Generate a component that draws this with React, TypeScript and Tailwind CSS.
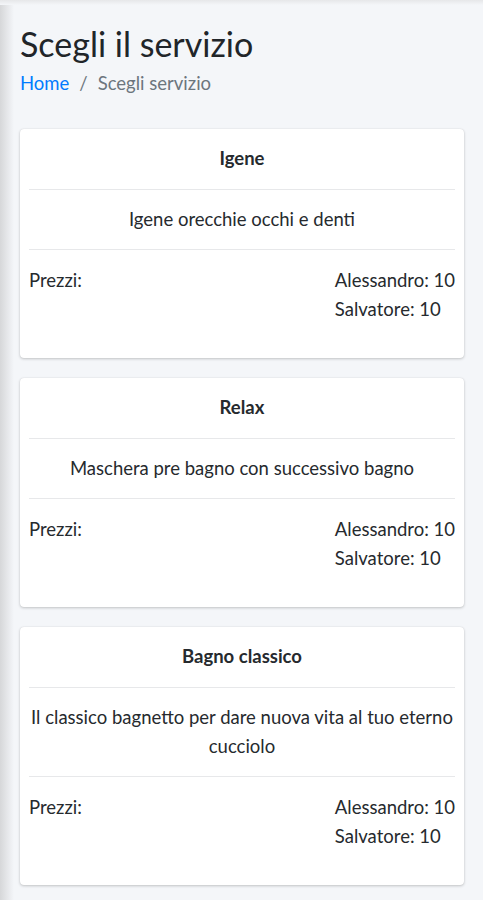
import React from "react";

type Service = { title: string; desc: string };

const services: Service[] = [
  { title: "Igene", desc: "Igene orecchie occhi e denti" },
  { title: "Relax", desc: "Maschera pre bagno con successivo bagno" },
  { title: "Bagno classico", desc: "Il classico bagnetto per dare nuova vita al tuo eterno cucciolo" },
];

function Card({ s }: { s: Service }) {
  return (
    <div className="bg-white rounded-[4px] shadow-[0_0_1px_rgba(0,0,0,0.13),0_1px_3px_rgba(0,0,0,0.2)] px-[9px]">
      <div className="pt-[15px] pb-[16px] leading-[29px] text-center font-bold border-b border-[#e7e8ea]">
        {s.title}
      </div>
      <div className="py-[15px] leading-[29px] text-center border-b border-[#e7e8ea]">{s.desc}</div>
      <div className="pt-[16px] pb-[34px] leading-[29px] flex justify-between">
        <div>Prezzi:</div>
        <div>
          <div>Alessandro: 10</div>
          <div>Salvatore: 10</div>
        </div>
      </div>
    </div>
  );
}

export default function App() {
  return (
    <div
      className="min-h-[900px] bg-[#f4f6f9] text-[#262a2e] text-[18.5px] relative"
      style={{ fontFamily: "Lato, 'Noto Sans', sans-serif" }}
    >
      <div className="absolute left-0 top-0 bottom-0 w-[14px] bg-[linear-gradient(to_right,#d6d7d9,#f4f6f9)]" />
      <div className="absolute left-0 right-0 top-0 h-[5px] bg-[linear-gradient(to_bottom,#e6e7e9,#f4f6f9)]" />
      <div className="relative pl-5 pr-[19px] pt-[23px]">
        <h1 className="text-[34px] leading-[41px] font-normal text-[#212529]">Scegli il servizio</h1>
        <div className="mt-[7px] leading-[24px] flex items-center">
          <span className="text-[#007bff]">Home</span>
          <span className="text-[#6c757d] px-[10px]">/</span>
          <span className="text-[#6c757d]">Scegli servizio</span>
        </div>
        <div className="mt-[34px] flex flex-col gap-5">
          {services.map((s) => (
            <Card key={s.title} s={s} />
          ))}
        </div>
      </div>
    </div>
  );
}
